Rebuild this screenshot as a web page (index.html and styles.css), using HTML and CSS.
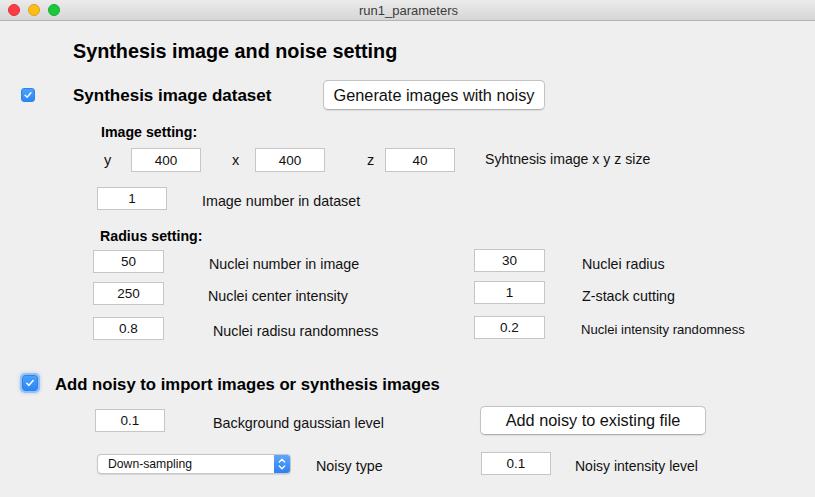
FILE: index.html
```html
<!DOCTYPE html>
<html>
<head>
<meta charset="utf-8">
<link rel="stylesheet" href="styles.css">
</head>
<body>
<div class="window">
  <div class="titlebar">
    <div class="lights">
      <span class="light red"></span>
      <span class="light yellow"></span>
      <span class="light green"></span>
    </div>
    <div class="wtitle">run1_parameters</div>
  </div>
  <div class="content">
    <div class="row r-heading"><span class="heading">Synthesis image and noise setting</span></div>

    <div class="row r-dataset">
      <span class="check c1"><svg viewBox="0 0 14 14" width="14" height="14"><path d="M3.6 7.3 L6 9.6 L10.4 4.4" fill="none" stroke="#fff" stroke-width="1.6" stroke-linecap="round" stroke-linejoin="round"/></svg></span>
      <span class="section">Synthesis image dataset</span>
      <button class="btn btn-gen">Generate images with noisy</button>
    </div>

    <div class="row r-imgset"><span class="sub">Image setting:</span></div>

    <div class="row r-xyz">
      <span class="axis ay">y</span>
      <span class="field f70">400</span>
      <span class="axis ax">x</span>
      <span class="field f70">400</span>
      <span class="axis az">z</span>
      <span class="field f70">40</span>
      <span class="lbl l-xyz">Syhtnesis image x y z size</span>
    </div>

    <div class="row r-num">
      <span class="field f70">1</span>
      <span class="lbl l-num">Image number in dataset</span>
    </div>

    <div class="row r-radset"><span class="sub">Radius setting:</span></div>

    <div class="row r-a">
      <span class="field f71">50</span>
      <span class="lbl la">Nuclei number in image</span>
      <span class="field f71 fr">30</span>
      <span class="lbl lr">Nuclei radius</span>
    </div>
    <div class="row r-b">
      <span class="field f71">250</span>
      <span class="lbl lb">Nuclei center intensity</span>
      <span class="field f71 fr">1</span>
      <span class="lbl lr">Z-stack cutting</span>
    </div>
    <div class="row r-c">
      <span class="field f71">0.8</span>
      <span class="lbl lc">Nuclei radisu randomness</span>
      <span class="field f71 fr">0.2</span>
      <span class="lbl lr2 small">Nuclei intensity randomness</span>
    </div>

    <div class="row r-noise">
      <span class="check c2"><svg viewBox="0 0 16 16" width="16" height="16"><path d="M4.3 8.3 L6.8 10.7 L11.6 5.2" fill="none" stroke="#fff" stroke-width="1.7" stroke-linecap="round" stroke-linejoin="round"/></svg></span>
      <span class="section s2">Add noisy to import images or synthesis images</span>
    </div>

    <div class="row r-bg">
      <span class="field f70">0.1</span>
      <span class="lbl l-bg">Background gaussian level</span>
      <button class="btn btn-add">Add noisy to existing file</button>
    </div>

    <div class="row r-sel">
      <div class="select">
        <span class="sel-text">Down-sampling</span>
        <span class="stepper"><svg viewBox="0 0 16 20" width="16" height="20"><path d="M5.3 8 L8 5.3 L10.7 8" fill="none" stroke="#fff" stroke-width="1.3" stroke-linecap="round" stroke-linejoin="round"/><path d="M5.3 12 L8 14.7 L10.7 12" fill="none" stroke="#fff" stroke-width="1.3" stroke-linecap="round" stroke-linejoin="round"/></svg></span>
      </div>
      <span class="lbl l-type">Noisy type</span>
      <span class="field f70">0.1</span>
      <span class="lbl l-int">Noisy intensity level</span>
    </div>
  </div>
</div>
</body>
</html>
```

FILE: styles.css
```css
html, body {
  margin: 0;
  padding: 0;
  background: #efefef;
}
body {
  font-family: "Liberation Sans", Arial, Helvetica, sans-serif;
  color: #111;
  width: 815px;
  height: 497px;
  overflow: hidden;
}
.window {
  width: 815px;
  height: 497px;
  background: #efefef;
}
.titlebar {
  height: 20px;
  border-bottom: 1px solid #b3b3b3;
  background: linear-gradient(#ebebeb, #d6d6d6);
  display: flex;
  align-items: center;
  position: relative;
}
.lights {
  display: flex;
  gap: 8px;
  padding-left: 8px;
  position: absolute;
  left: 0;
  top: 4px;
}
.light {
  width: 12px;
  height: 12px;
  border-radius: 50%;
  display: block;
  box-sizing: border-box;
}
.red { background: #fc3d43; border: 0.5px solid #e0333a; }
.yellow { background: #fdbc17; border: 0.5px solid #dea11a; }
.green { background: #19c93a; border: 0.5px solid #16ad2f; }
.wtitle {
  flex: 1;
  text-align: center;
  font-size: 13px;
  color: #3c3c3c;
  padding-left: 2px;
}
.content {
  display: flex;
  flex-direction: column;
}
.row {
  display: flex;
  align-items: center;
  white-space: nowrap;
}
.heading {
  font-weight: bold;
  font-size: 19.8px;
  color: #000;
  position: relative;
  top: 1px;
}
.r-heading { margin-top: 17px; height: 24px; padding-left: 73px; }
.r-dataset { margin-top: 18px; height: 30px; padding-left: 21px; }
.check {
  display: flex;
  align-items: center;
  justify-content: center;
  background: linear-gradient(#4aa2fc, #2a86f7);
  border-radius: 3px;
  box-sizing: border-box;
  border: 1px solid #2e82e8;
}
.c1 { width: 14px; height: 14px; }
.c2 {
  width: 16px;
  height: 16px;
  box-shadow: 0 0 0 2px rgba(110, 165, 240, 0.55), 0 0 3px 3px rgba(130, 180, 245, 0.35);
}
.section {
  font-weight: bold;
  font-size: 17px;
  color: #000;
  margin-left: 38px;
  width: 250px;
  position: relative;
  top: 1px;
}
.s2 { margin-left: 17px; width: auto; font-size: 16.7px; top: 2px; }
.btn {
  font-family: "Liberation Sans", Arial, Helvetica, sans-serif;
  background: #fff;
  border: 1px solid #c3c3c3;
  border-bottom-color: #b0b0b0;
  border-radius: 5px;
  color: #111;
  padding: 0;
  box-shadow: 0 0.5px 1px rgba(0,0,0,0.08);
}
.btn-gen { width: 222px; height: 30px; font-size: 16.3px; }
.btn-add { width: 226px; height: 29px; font-size: 16.3px; margin-left: 95px; }
.sub {
  font-weight: bold;
  font-size: 14.2px;
  color: #000;
}
.r-imgset { margin-top: 14px; height: 16px; padding-left: 101px; }
.r-xyz { margin-top: 8px; height: 24px; padding-left: 104px; }
.field {
  background: #fff;
  border: 1px solid #c6c6c6;
  box-sizing: border-box;
  height: 23px;
  font-size: 13.5px;
  display: flex;
  align-items: center;
  justify-content: center;
  color: #111;
}
.r-xyz .field { height: 24px; }
.f70 { width: 70px; }
.f71 { width: 71px; }
.axis { font-size: 14.5px; color: #111; }
.ay { width: 27px; }
.ax { width: 23px; margin-left: 31px; }
.az { width: 18px; margin-left: 42px; }
.lbl { font-size: 14.3px; color: #111; position: relative; top: 2px; }
.l-xyz { margin-left: 30px; font-size: 14.1px; top: -1px; }
.r-num { margin-top: 15px; height: 23px; padding-left: 97px; }
.l-num { margin-left: 35px; }
.r-radset { margin-top: 18px; height: 16px; padding-left: 100px; }
.r-a { margin-top: 6px; height: 23px; padding-left: 93px; }
.r-b { margin-top: 9px; height: 23px; padding-left: 93px; }
.r-c { margin-top: 12px; height: 23px; padding-left: 93px; }
.la { margin-left: 45px; width: 265px; }
.lb { margin-left: 44px; width: 266px; }
.lc { margin-left: 49px; width: 261px; }
.fr { position: relative; top: -1px; }
.lr { margin-left: 37px; }
.lr2 { margin-left: 36px; top: 1px; }
.small { font-size: 13.1px; }
.r-noise { margin-top: 32px; height: 22px; padding-left: 22px; }
.r-bg { margin-top: 12px; height: 29px; padding-left: 95px; }
.l-bg { margin-left: 48px; width: 172px; }
.r-sel { margin-top: 17px; height: 23px; padding-left: 97px; }
.select {
  width: 194px;
  height: 20px;
  background: #fff;
  border: 1px solid #c6c6c6;
  border-radius: 4px;
  box-sizing: border-box;
  display: flex;
  align-items: center;
  overflow: hidden;
  box-shadow: 0 0.5px 1px rgba(0,0,0,0.1);
}
.sel-text {
  flex: 1;
  font-size: 12.2px;
  padding-left: 10px;
  color: #111;
}
.stepper {
  width: 16px;
  height: 20px;
  background: linear-gradient(#5fa8fb, #2b7ff3);
  display: flex;
  align-items: center;
  justify-content: center;
}
.l-type { margin-left: 25px; width: 165px; }
.l-int { margin-left: 24px; font-size: 14px; }
```
